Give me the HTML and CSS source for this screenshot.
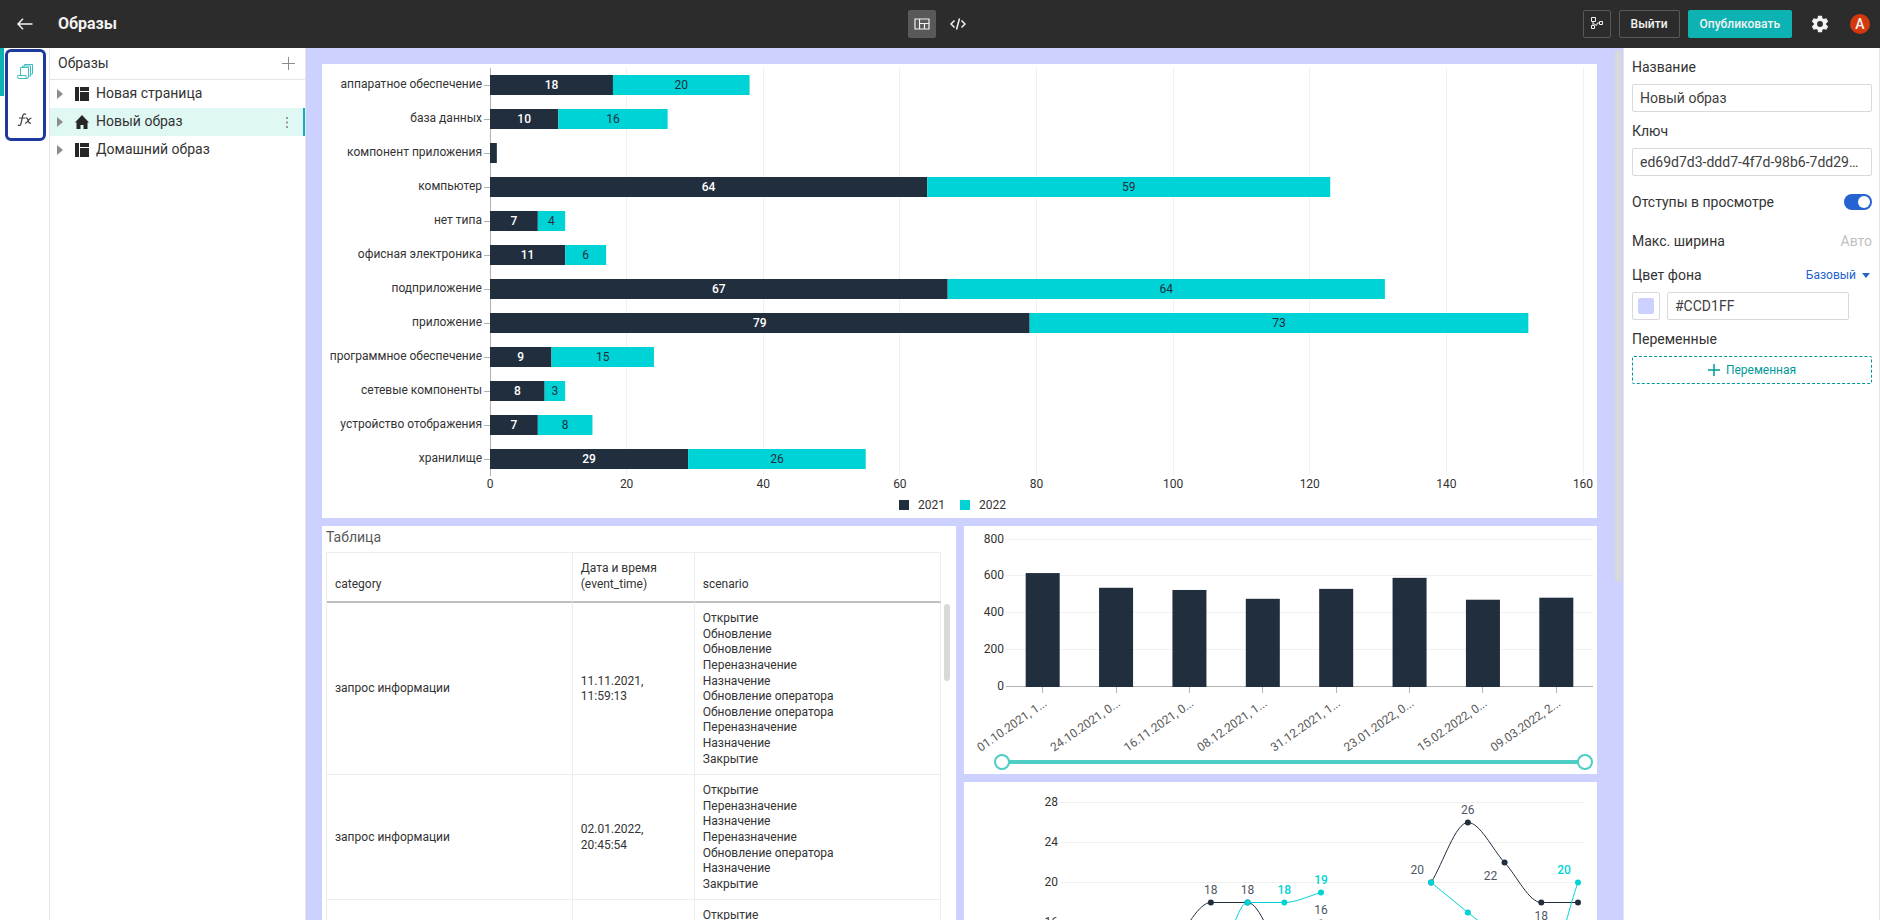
FILE: index.html
```html
<!DOCTYPE html>
<html lang="ru">
<head>
<meta charset="utf-8">
<title>Образы</title>
<link rel="stylesheet" href="styles.css">
</head>
<body>
<header class="topbar">
  <div class="topbar-left">
    <button class="icon-button back" aria-label="Назад"><svg width="16" height="12" viewBox="0 0 16 12" fill="none" stroke="currentColor" stroke-width="1.5"><path d="M6 .8 1 6l5 5.2M1 6h14.5"/></svg></button>
    <h1 class="topbar-title">Образы</h1>
  </div>
  <div class="topbar-modes">
    <button class="icon-button mode active" aria-label="Макет"><svg width="16" height="12" viewBox="0 0 16 12" fill="none" stroke="currentColor" stroke-width="1.2"><path d="M1 1h14v10H1zM5.5 1v10M5.5 5.5H15M10.500 5.500V11"/></svg></button>
    <button class="icon-button mode" aria-label="Код"><svg width="16" height="12" viewBox="0 0 16 12" fill="none" stroke="currentColor" stroke-width="1.5"><path d="M4.500 2.500 1 6l3.500 3.500M11.500 2.500 15 6l-3.500 3.500M9.500.5l-3 11"/></svg></button>
  </div>
  <div class="topbar-right">
    <button class="button outline square" aria-label="Структура"><svg width="12" height="12" viewBox="0 0 12 12" fill="none" stroke="currentColor"><path d="M.5.5h4v4h-4zM.5 8.500h3v3h-3zM8.500 4.500h3v3h-3zM2 4.500v4M2.500 6.500 5.500 8.500 6.500 6h2"/></svg></button>
    <button class="button outline">Выйти</button>
    <button class="button primary">Опубликовать</button>
    <button class="icon-button gear" aria-label="Настройки"><svg width="20" height="20" viewBox="0 0 24 24" fill="currentColor"><path d="M19.430 12.980c.04-.32.07-.64.07-.98s-.03-.66-.07-.98l2.110-1.650c.19-.15.24-.42.12-.64l-2-3.460c-.12-.22-.39-.3-.61-.22l-2.490 1c-.52-.4-1.080-.73-1.690-.98l-.38-2.650A.49.49 0 0 0 14 2h-4c-.25 0-.46.18-.49.42l-.38 2.650c-.61.25-1.170.59-1.690.98l-2.490-1c-.23-.09-.49 0-.61.22l-2 3.460c-.13.22-.07.49.12.64l2.110 1.650c-.04.32-.07.65-.07.98s.03.66.07.98l-2.110 1.650c-.19.15-.24.42-.12.64l2 3.460c.12.22.39.3.61.22l2.490-1c.52.4 1.080.73 1.690.98l.38 2.650c.03.24.24.42.49.42h4c.25 0 .46-.18.49-.42l.38-2.650c.61-.25 1.170-.59 1.690-.98l2.490 1c.23.09.49 0 .61-.22l2-3.460c.12-.22.07-.49-.12-.64zM12 15.500a3.500 3.500 0 1 1 0-7 3.500 3.500 0 0 1 0 7z"/></svg></button>
    <span class="avatar">A</span>
  </div>
</header>

<main class="workspace">
  <nav class="rail">
    <div class="rail-group">
      <button class="rail-item current" aria-label="Образы"><svg width="16" height="16" viewBox="0 0 16 16" fill="none" stroke="currentColor"><path d="M3.500 11.500v-8h8V13M5.500 3.500V2h8v10h-1.500M7.500 2V.5h8V10h-1.500M.5 11.500h8.500v1.500q0 1.500 1.200 1.500t1.300-1.500M.5 11.500v1q0 2 1.500 2h8"/></svg></button>
      <button class="rail-item functions" aria-label="Функции"><svg width="16" height="14" viewBox="0 0 16 14" fill="none" stroke="currentColor" stroke-width="1.200"><path d="M9 1.500Q6.500-.2 5.700 3L4 10.500Q3.300 13.500.8 12M2 5h6M8.500 5q1.500-.5 2 1l1.200 3q.6 1.500 2.300 1M14.500 5q-1.500 0-3.500 2.800T8 10.300"/></svg></button>
    </div>
  </nav>

  <aside class="tree">
    <div class="tree-head"><h2 class="tree-title">Образы</h2><button class="icon-button add" aria-label="Добавить"><svg width="13" height="13" viewBox="0 0 13 13" stroke="currentColor"><path d="M6.500 0v13M0 6.500h13"/></svg></button></div>
    <ul class="tree-list">
      <li class="tree-row"><svg class="caret" width="6" height="10"><path d="M0 0l6 5-6 5z"/></svg><svg class="tree-icon" width="14" height="14"><path d="M0 0h4v14H0zM5 0h9v4H5zM5 5h9v9H5z"/></svg><a class="tree-link" href="#page">Новая страница</a></li>
      <li class="tree-row selected"><svg class="caret" width="6" height="10"><path d="M0 0l6 5-6 5z"/></svg><svg class="tree-icon" width="14" height="14"><path d="M7 0l7 7.500h-1.500V14H8.500v-4h-3v4h-4V7.500H0z"/></svg><a class="tree-link" href="#view">Новый образ</a><button class="icon-button more" aria-label="Ещё"><svg width="2" height="11" fill="currentColor"><path d="M0 0h2v2H0zM0 4.500h2v2H0zM0 9h2v2H0z"/></svg></button></li>
      <li class="tree-row"><svg class="caret" width="6" height="10"><path d="M0 0l6 5-6 5z"/></svg><svg class="tree-icon" width="14" height="14"><path d="M0 0h4v14H0zM5 0h9v4H5zM5 5h9v9H5z"/></svg><a class="tree-link" href="#home">Домашний образ</a></li>
    </ul>
  </aside>

  <section class="canvas">
    <div class="board">
      <div class="card wide"><svg class="chart" id="stacked" role="img" aria-label="Количество по типам"></svg></div>
      <div class="card table-card">
        <h3 class="card-title">Таблица</h3>
        <table class="grid">
          <colgroup><col class="col-wide"><col class="col-time"><col class="col-wide"></colgroup>
          <thead><tr><th>category</th><th>Дата и время<br>(event_time)</th><th>scenario</th></tr></thead>
          <tbody>
            <tr><td>запрос информации</td><td>11.11.2021,<br>11:59:13</td><td>Открытие<br>Обновление<br>Обновление<br>Переназначение<br>Назначение<br>Обновление оператора<br>Обновление оператора<br>Переназначение<br>Назначение<br>Закрытие</td></tr>
            <tr><td>запрос информации</td><td>02.01.2022,<br>20:45:54</td><td>Открытие<br>Переназначение<br>Назначение<br>Переназначение<br>Обновление оператора<br>Назначение<br>Закрытие</td></tr>
            <tr><td></td><td></td><td>Открытие</td></tr>
          </tbody>
        </table>
        <span class="thumb table-thumb"></span>
      </div>
      <div class="side">
        <div class="card columns-card">
          <svg class="chart" id="columns" role="img" aria-label="Количество по датам"></svg>
          <div class="range">
            <input class="range-input" type="range" min="0" max="100" value="0" aria-label="Начало периода">
            <input class="range-input upper" type="range" min="0" max="100" value="100" aria-label="Конец периода">
          </div>
        </div>
        <div class="card"><svg class="chart" id="lines" role="img" aria-label="Динамика"></svg></div>
      </div>
    </div>
    <span class="thumb canvas-thumb"></span>
  </section>

  <form class="props">
    <label class="props-label" for="name">Название</label>
    <input class="field" id="name" type="text" value="Новый образ">
    <label class="props-label next" for="key">Ключ</label>
    <input class="field" id="key" type="text" value="ed69d7d3-ddd7-4f7d-98b6-7dd29c41e0a7">
    <div class="props-row toggle-row"><label for="pad">Отступы в просмотре</label><input class="switch" id="pad" type="checkbox" checked></div>
    <div class="props-row width-row"><label for="maxw">Макс. ширина</label><input class="ghost" id="maxw" type="text" placeholder="Авто"></div>
    <div class="props-row color-row"><label for="color">Цвет фона</label><button class="mode-link" type="button">Базовый<svg width="8" height="5" fill="currentColor"><path d="M0 0h8L4 5z"/></svg></button></div>
    <div class="color-fields"><button class="swatch" type="button" aria-label="Выбрать цвет"><span class="swatch-fill"></span></button><input class="field color-field" id="color" type="text" value="#CCD1FF"></div>
    <div class="props-label next">Переменные</div>
    <button class="add-var" type="button"><svg width="12" height="12" stroke="currentColor" stroke-width="1.500"><path d="M6 0v12M0 6h12"/></svg>Переменная</button>
  </form>
</main>
<script src="charts.js"></script>
</body>
</html>
```
FILE: styles.css
```css
* { box-sizing: border-box; }
body {
  margin: 0;
  height: 100vh;
  display: flex;
  flex-direction: column;
  overflow: hidden;
  font: 14px/20px Roboto, "Noto Sans", sans-serif;
  color: #333;
  background: #fff;
}
h1, h2, h3, ul { margin: 0; padding: 0; font-weight: 400; list-style: none; }
button, input { font: inherit; color: inherit; margin: 0; padding: 0; }
button { cursor: pointer; }
svg { display: block; flex: none; }

.topbar {
  flex: none;
  height: 48px;
  display: grid;
  grid-template-columns: 1fr auto 1fr;
  align-items: center;
  background: #2c2c2c;
  color: #f2f2f2;
}
.icon-button { border: 0; background: none; display: flex; align-items: center; justify-content: center; }
.topbar-left { display: flex; align-items: center; }
.back { width: 50px; height: 48px; }
.topbar-title { font-size: 16px; font-weight: 700; padding-left: 8px; }
.topbar-modes { display: flex; gap: 8px; }
.mode { width: 28px; height: 28px; border-radius: 2px; }
.mode.active { background: #595959; }
.topbar-right { display: flex; align-items: center; justify-content: flex-end; gap: 8px; padding-right: 10px; }
.button { height: 28px; border: 1px solid transparent; border-radius: 2px; padding: 0 11px; font-size: 12px; font-weight: 500; }
.outline { background: none; border-color: #595959; }
.square { width: 28px; padding: 0 0 2px; display: flex; align-items: center; justify-content: center; }
.primary { background: #0db3b3; }
.gear { width: 40px; height: 40px; }
.avatar {
  width: 20px;
  height: 20px;
  margin-left: 2px;
  border-radius: 50%;
  background: #d4380d;
  font-weight: 500;
  text-align: center;
}

.workspace { flex: 1; min-height: 0; display: flex; }
.rail { position: relative; flex: none; width: 50px; padding: 1px 3px 0 5px; border-right: 1px solid #e5e5e5; }
.rail::before { content: ""; position: absolute; left: 0; top: 0; width: 4px; height: 48px; background: #0db3b3; }
.rail-group { border: 3px solid #1f3a9e; border-radius: 6px; padding-right: 1px; }
.rail-item { width: 100%; height: 46px; border: 0; background: none; display: flex; align-items: center; justify-content: center; color: #404040; }
.rail-item.current { height: 40px; color: #3dbfbf; }
.rail-item.functions { padding-top: 9px; }

.tree { flex: none; width: 256px; border-right: 1px solid #e5e5e5; }
.tree-head { height: 32px; display: flex; align-items: center; justify-content: space-between; padding: 0 10px 0 8px; border-bottom: 1px solid #e5e5e5; }
.tree-title { font-size: 14px; padding-bottom: 1px; }
.add { color: #8c8c8c; }
.tree-row { height: 28px; display: flex; align-items: center; padding: 0 14px 0 7px; }
.selected { background: #e0f8f4; border-right: 2px solid #0db3b3; }
.caret { fill: #8c8c8c; margin-right: 12px; }
.tree-icon { fill: #262626; margin-right: 7px; }
.tree-link { flex: 1; color: inherit; text-decoration: none; padding-bottom: 2px; }
.more { color: #999; width: 4px; }

.canvas { flex: 1; min-width: 0; position: relative; overflow: hidden; background: #ccd1ff; padding: 16px 26px 0 16px; }
.board { display: grid; grid-template-columns: minmax(0, 1fr) minmax(0, 1fr); gap: 8px; }
.wide { grid-column: 1 / -1; }
.card { position: relative; background: #fff; }
.chart { width: 100%; overflow: hidden; }
#stacked { height: 454px; }
#columns { height: 227px; }
#lines { height: 320px; }
.side { display: flex; flex-direction: column; gap: 8px; }
.thumb { position: absolute; width: 6px; border-radius: 3px; background: #d9d9d9; }
.canvas-thumb { top: 2px; right: 2px; height: 532px; }
.table-thumb { top: 78px; right: 6px; height: 77px; }

.table-card { padding: 1px 15px 0 4px; }
.card-title { font-size: 14px; line-height: 20px; color: #595959; padding-bottom: 5px; }
.grid { width: 100%; table-layout: fixed; border-collapse: separate; border-spacing: 0; font-size: 12px; line-height: 1.3; border: solid #ededed; border-width: 1px 0 0 1px; }
.grid th, .grid td { text-align: left; padding: 8px 8px 7px; border-right: 1px solid #ededed; border-bottom: 1px solid #ededed; }
.grid th { font-weight: 400; vertical-align: bottom; padding-bottom: 9px; border-bottom: 2px solid #bfbfbf; }
.col-time { width: 122px; }

.range { display: grid; margin: 0 4px 3px 30px; height: 18px; align-items: center; }
.range-input { grid-area: 1 / 1; width: 100%; height: 18px; appearance: none; background: linear-gradient(#4ecdc4, #4ecdc4) center / calc(100% - 16px) 4px no-repeat; }
.range-input.upper { background: none; pointer-events: none; }
.range-input::-webkit-slider-thumb { appearance: none; width: 16px; height: 16px; border: 2px solid #4ecdc4; border-radius: 50%; background: #fff; pointer-events: auto; }

.axis { font-size: 12px; fill: #333; }
.tilted { font-size: 12px; fill: #595959; }
.value-dark { font-size: 12px; font-weight: 500; fill: #fff; }
.value-light { font-size: 12px; fill: #212e3e; }
.point-dark { font-size: 12px; fill: #4d5765; }
.point-cyan { font-size: 12px; font-weight: 500; fill: #00d3d5; }

.props { flex: none; width: 257px; border: solid #e5e5e5; border-width: 0 1px; padding: 8px 7px 0 8px; line-height: 22px; }
.props-label { display: block; margin-bottom: 6px; }
.next { margin-top: 8px; }
.field { display: block; width: 100%; height: 28px; border: 1px solid #d9d9d9; border-radius: 2px; padding: 0 7px; color: #404040; text-overflow: ellipsis; background: #fff; }
.props-row { display: flex; align-items: center; justify-content: space-between; height: 22px; }
.toggle-row { margin-top: 15px; }
.width-row { margin-top: 17px; }
.color-row { margin: 12px 0 6px; }
.switch { appearance: none; width: 28px; height: 16px; border-radius: 8px; background: #2463d1; padding: 2px; }
.switch::before { content: ""; display: block; width: 12px; height: 12px; border-radius: 50%; background: #fff; margin-left: 12px; }
.ghost { width: 80px; border: 0; text-align: right; background: none; }
.ghost::placeholder { color: #bfbfbf; }
.mode-link { display: flex; align-items: center; gap: 6px; padding-right: 2px; border: 0; background: none; color: #2463d1; font-size: 12px; }
.color-fields { display: flex; gap: 7px; }
.swatch { width: 28px; height: 28px; flex: none; display: flex; align-items: center; justify-content: center; border: 1px solid #d9d9d9; border-radius: 2px; background: #fff; }
.swatch-fill { width: 16px; height: 16px; border-radius: 2px; background: #ccd1ff; }
.color-field { margin-right: 23px; }
.add-var { width: 100%; height: 28px; display: flex; align-items: center; justify-content: center; gap: 6px; border: 1px dashed #099; border-radius: 2px; background: none; color: #099; font-size: 12px; }
```
FILE: charts.js
```js
const DARK = '#212e3e';
const CYAN = '#00d3d5';

const rect = (x, y, w, h, fill) => `<rect x="${x}" y="${y}" width="${w}" height="${h}" fill="${fill}"/>`;
const line = (x1, y1, x2, y2, stroke) => `<path d="M${x1} ${y1}L${x2} ${y2}" stroke="${stroke}"/>`;
const text = (x, y, s, cls, anchor = 'middle') => `<text x="${x}" y="${y}" class="${cls}" text-anchor="${anchor}">${s}</text>`;
const crisp = v => Math.floor(v) + 0.5;

function drawStacked(svg) {
  const rows = [
    ['аппаратное обеспечение', 18, 20], ['база данных', 10, 16], ['компонент приложения', 1, 0],
    ['компьютер', 64, 59], ['нет типа', 7, 4], ['офисная электроника', 11, 6],
    ['подприложение', 67, 64], ['приложение', 79, 73], ['программное обеспечение', 9, 15],
    ['сетевые компоненты', 8, 3], ['устройство отображения', 7, 8], ['хранилище', 29, 26]
  ];
  const width = svg.clientWidth, left = 168, top = 4, pitch = 34, bottom = top + pitch * rows.length;
  const unit = (width - 14 - left) / 160;
  let out = '';
  for (let v = 0; v <= 160; v += 20) {
    const x = left + v * unit;
    out += line(crisp(x), top, crisp(x), bottom, v ? '#f0f0f0' : '#b3b3b3');
    out += text(x, bottom + 12, v, 'axis');
  }
  rows.forEach(([name, a, b], i) => {
    const y = top + i * pitch + 7, mid = y + 10, wa = a * unit, wb = b * unit;
    out += line(left - 6, mid + 0.5, left, mid + 0.5, '#b3b3b3');
    out += text(left - 8, mid + 3, name, 'axis', 'end');
    out += rect(left, y, wa, 20, DARK) + rect(left + wa, y, wb, 20, CYAN);
    if (a > 2) out += text(left + wa / 2, mid + 4, a, 'value-dark');
    if (b) out += text(left + wa + wb / 2, mid + 4, b, 'value-light');
  });
  const lx = Math.round(width / 2) - 61;
  out += rect(lx, 436, 10, 10, DARK) + text(lx + 19, 445, '2021', 'axis', 'start');
  out += rect(lx + 61, 436, 10, 10, CYAN) + text(lx + 80, 445, '2022', 'axis', 'start');
  svg.innerHTML = out;
}

function drawColumns(svg) {
  const data = [
    ['01.10.2021, 1...', 620], ['24.10.2021, 0...', 540], ['16.11.2021, 0...', 528], ['08.12.2021, 1...', 480],
    ['31.12.2021, 1...', 534], ['23.01.2022, 0...', 594], ['15.02.2022, 0...', 475], ['09.03.2022, 2...', 486]
  ];
  const width = svg.clientWidth, left = 42, right = width - 5, base = 160, scale = 147 / 800;
  const pitch = (right - left) / data.length;
  let out = '';
  for (let v = 0; v <= 800; v += 200) {
    const y = crisp(base - v * scale);
    out += line(left, y, right, y, v ? '#f0f0f0' : '#b3b3b3');
    out += text(left - 2, y + 3, v, 'axis', 'end');
  }
  data.forEach(([name, v], i) => {
    const x = left + pitch * (i + 0.5), h = v * scale;
    out += line(crisp(x), base, crisp(x), base + 7, '#b3b3b3');
    out += rect(x - 17, base + 1 - h, 34, h, DARK);
    out += `<text class="tilted" text-anchor="end" transform="translate(${x + 5} ${base + 19}) rotate(-35)">${name}</text>`;
  });
  svg.innerHTML = out;
}

// Cubic path through the points with monotone tangents, so the curve never overshoots a peak.
function smooth(pts) {
  const n = pts.length;
  const slope = i => (pts[i + 1][1] - pts[i][1]) / (pts[i + 1][0] - pts[i][0]);
  const tangent = pts.map((p, i) => {
    if (i === 0) return slope(0);
    if (i === n - 1) return slope(n - 2);
    const a = slope(i - 1), b = slope(i);
    return a * b <= 0 ? 0 : (a + b) / 2;
  });
  let d = `M${pts[0]}`;
  for (let i = 0; i < n - 1; i++) {
    const [x0, y0] = pts[i], [x1, y1] = pts[i + 1], s = (x1 - x0) / 3;
    d += `C${x0 + s} ${y0 + s * tangent[i]} ${x1 - s} ${y1 - s * tangent[i + 1]} ${x1} ${y1}`;
  }
  return d;
}

function drawLines(svg) {
  const width = svg.clientWidth, left = 96, right = width - 14;
  const pitch = (right - left - 10) / 14;
  const px = i => left + 4 + i * pitch;
  const py = v => 20.5 + (28 - v) * 10;
  let out = '';
  for (let v = 28; v >= 16; v -= 4) {
    out += line(left, py(v), right, py(v), '#f0f0f0');
    out += text(left - 2, py(v) + 3, v, 'axis', 'end');
  }
  const series = [
    [DARK, [[3, 14], [4, 18], [5, 18], [6, 12]]],
    [DARK, [[7, 16]]],
    [DARK, [[10, 20], [11, 26], [12, 22], [13, 18], [14, 18]]],
    [CYAN, [[4, 8], [5, 18], [6, 18], [7, 19]]],
    [CYAN, [[10, 20], [11, 17], [12, 14], [13, 10], [14, 20]]]
  ];
  for (const [color, values] of series) {
    const pts = values.map(([i, v]) => [px(i), py(v)]);
    if (pts.length > 1) out += `<path d="${smooth(pts)}" fill="none" stroke="${color}"/>`;
    out += pts.map(([x, y]) => `<circle cx="${x}" cy="${y}" r="3" fill="${color}"/>`).join('');
  }
  const labels = [[4, 18, '18', 0, -9], [5, 18, '18', 0, -9], [7, 16, '16', 0, -9], [10, 20, '20', -14, -9],
    [11, 26, '26', 0, -9], [12, 22, '22', -14, 17], [13, 18, '18', 0, 17]];
  for (const [i, v, s, dx, dy] of labels) out += text(px(i) + dx, py(v) + dy, s, 'point-dark');
  const cyan = [[6, 18, '18', 0, -9], [7, 19, '19', 0, -9], [14, 20, '20', -14, -9]];
  for (const [i, v, s, dx, dy] of cyan) out += text(px(i) + dx, py(v) + dy, s, 'point-cyan');
  svg.innerHTML = out;
}

function draw() {
  drawStacked(document.getElementById('stacked'));
  drawColumns(document.getElementById('columns'));
  drawLines(document.getElementById('lines'));
}
draw();
window.addEventListener('resize', draw);
```
